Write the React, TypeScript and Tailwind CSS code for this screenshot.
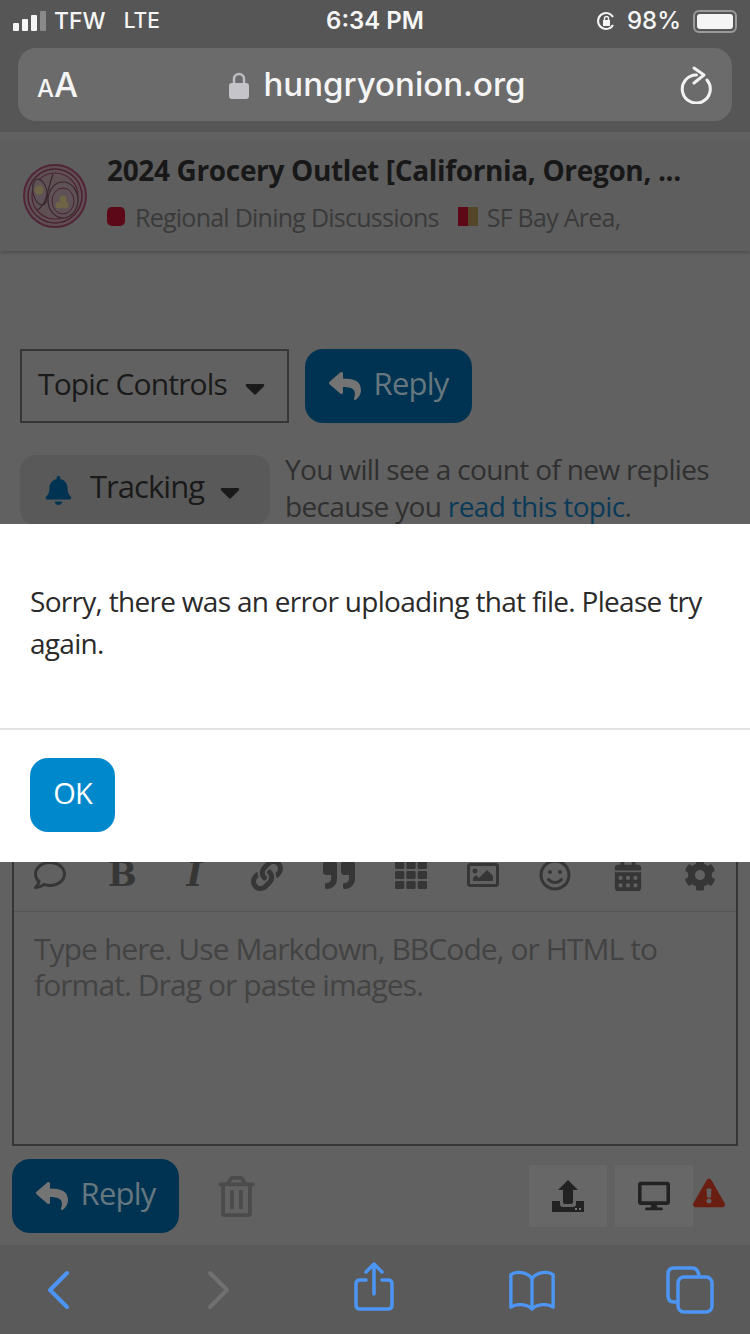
import {
  FaBell,
  FaCalendarAlt,
  FaCaretDown,
  FaCog,
  FaDesktop,
  FaExclamationTriangle,
  FaLink,
  FaQuoteRight,
  FaRegComment,
  FaRegImage,
  FaRegSmile,
  FaRegTrashAlt,
  FaReply,
  FaTh,
} from "react-icons/fa";

const font = "font-['Open_Sans','Noto_Sans',sans-serif]";

function Onion() {
  return (
    <svg width="66" height="66" viewBox="0 0 66 66" fill="none">
      <circle cx="33" cy="33" r="32" fill="#5f5054" />
      <circle cx="33" cy="33" r="31" stroke="#512639" strokeWidth="2" />
      <circle cx="33" cy="33" r="27" stroke="#4a2033" strokeWidth="1.5" />
      <circle cx="33" cy="33" r="23" stroke="#4d2437" strokeWidth="1.2" />
      <ellipse cx="41" cy="37" rx="15" ry="18" fill="#5e5256" stroke="#3a272f" strokeWidth="1.2" />
      <ellipse cx="41" cy="38" rx="11" ry="13" stroke="#4a2033" strokeWidth="1" />
      <ellipse cx="18" cy="29" rx="7" ry="13" fill="#5e5256" stroke="#3a272f" strokeWidth="1.2" transform="rotate(-12 18 29)" />
      <path d="M31 11 C25 28 25 42 15 47" stroke="#3a272f" strokeWidth="1.2" />
      <circle cx="17" cy="27" r="4.5" fill="#6f6546" />
      <circle cx="37" cy="42" r="3.5" fill="#6f6546" />
      <circle cx="41" cy="36" r="3.5" fill="#6f6546" />
      <circle cx="43" cy="42" r="3.5" fill="#6f6546" />
    </svg>
  );
}

function Reload() {
  return (
    <svg width="32" height="38" viewBox="0 0 32 38" fill="none" stroke="#f2f2f2" strokeWidth="3" strokeLinecap="round" strokeLinejoin="round">
      <path d="M16.5 9 A14 14 0 1 0 27 14" />
      <path d="M14 2 L24 9 L14 17" />
    </svg>
  );
}

function UploadIcon() {
  return (
    <svg width="32" height="32" viewBox="0 0 32 32" fill="#222">
      <path d="M16 0 L26 10 H21 V22 Q21 24 19 24 H13 Q11 24 11 22 V10 H6 Z" />
      <path d="M0 21 H8 V24 Q8 27 11 27 H21 Q24 27 24 24 V21 H32 V32 H0 Z" />
      <rect x="23" y="28" width="2" height="2" fill="#777" />
      <rect x="27" y="28" width="2" height="2" fill="#777" />
    </svg>
  );
}

function SafariBar() {
  return (
    <div className="flex h-[89px] items-center justify-between bg-[#5a5a5a] pl-[34px] pr-[36px] [&>div]:flex [&>div]:w-[48px] [&>div]:justify-center">
      <div>
        <svg width="24" height="40" viewBox="0 0 24 40" fill="none" stroke="#4c95f5" strokeWidth="4" strokeLinecap="round" strokeLinejoin="round">
          <path d="M21 3 L4 20 L21 37" />
        </svg>
      </div>
      <div>
        <svg width="24" height="40" viewBox="0 0 24 40" fill="none" stroke="#707070" strokeWidth="4" strokeLinecap="round" strokeLinejoin="round" className="ml-[5px]">
          <path d="M3 3 L20 20 L3 37" />
        </svg>
      </div>
      <div>
        <svg width="40" height="50" viewBox="0 0 40 50" fill="none" stroke="#4c95f5" strokeWidth="3.5" strokeLinecap="round" strokeLinejoin="round" className="-mt-[5px]">
          <path d="M12 18 H6 Q2 18 2 22 V43 Q2 47 6 47 H34 Q38 47 38 43 V22 Q38 18 34 18 H28" />
          <path d="M20 32 V3 M12 10 L20 2 L28 10" />
        </svg>
      </div>
      <div>
        <svg width="50" height="42" viewBox="0 0 50 42" fill="none" stroke="#4c95f5" strokeWidth="3.5" strokeLinecap="round" strokeLinejoin="round">
          <path d="M25 9 C20 2 8 1 3 5 V39 C8 35 20 35 25 41 C30 35 42 35 47 39 V5 C42 1 30 2 25 9 Z" />
          <path d="M25 9 V40" />
        </svg>
      </div>
      <div>
        <svg width="48" height="48" viewBox="0 0 48 48" fill="none" stroke="#4c95f5" strokeWidth="3.5" strokeLinejoin="round">
          <path d="M11 36 H8 Q2 36 2 30 V8 Q2 2 8 2 H26 Q32 2 33 10" />
          <rect x="12" y="11" width="34" height="35" rx="6" />
        </svg>
      </div>
    </div>
  );
}

function ReplyButton() {
  return (
    <div className="flex h-[74px] w-[167px] items-center justify-center rounded-[18px] bg-[#003352] text-[31px] tracking-[-0.8px] text-[#66777f]">
      <FaReply className="mr-[13px] text-[32px] text-[#747474]" />
      <span className="pb-[6px]">Reply</span>
    </div>
  );
}

export default function App() {
  return (
    <div className={`relative flex h-[1334px] w-[750px] flex-col overflow-hidden bg-[#616161] ${font}`}>
      {/* Safari chrome */}
      <div className="flex h-[132px] flex-col bg-[#565656]">
        <div className="flex h-[42px] items-center justify-between pl-[13px] pr-[13px] font-['Inter',sans-serif] text-[#f5f5f5]">
          <div className="flex w-[260px] items-center text-[23px] font-medium">
            <div className="flex items-end gap-[3px]">
              <span className="h-[8px] w-[6px] rounded-[1px] bg-[#f5f5f5]" />
              <span className="h-[12px] w-[6px] rounded-[1px] bg-[#f5f5f5]" />
              <span className="h-[16px] w-[6px] rounded-[1px] bg-[#f5f5f5]" />
              <span className="h-[20px] w-[6px] rounded-[1px] bg-[#8a8a8a]" />
            </div>
            <span className="ml-[8px]">TFW</span>
            <span className="ml-[18px] text-[21px]">LTE</span>
          </div>
          <div className="text-[24px] font-semibold">6:34 PM</div>
          <div className="flex w-[260px] items-center justify-end text-[24px] font-medium">
            <svg width="20" height="20" viewBox="0 0 20 20" fill="none" stroke="#f5f5f5" strokeWidth="2" className="-ml-[4px]">
              <path d="M17 14 A8 8 0 1 1 17 6" />
              <rect x="7" y="9" width="7" height="6" fill="#f5f5f5" stroke="none" />
              <path d="M8.5 9 V7.5 A2 2 0 0 1 12.5 7.5 V9" strokeWidth="1.4" />
            </svg>
            <span className="ml-[11px] mr-[1px]">98%</span>
            <div className="ml-[11px] flex h-[23px] w-[44px] items-center rounded-[6px] border-2 border-[#9a9a9a] p-[2px]">
              <div className="h-full w-full rounded-[3px] bg-[#f5f5f5]" />
            </div>
          </div>
        </div>
        <div className="mx-[18px] mt-[6px] flex h-[73px] items-center rounded-[18px] bg-[#6b6b6b] pl-[19px] pr-[20px] font-['Inter',sans-serif] text-[#f5f5f5]">
          <div className="flex w-[60px] items-baseline font-medium">
            <span className="text-[24px]">A</span>
            <span className="text-[34px]">A</span>
          </div>
          <div className="flex flex-1 items-center justify-center pr-[22px] text-[33px] font-medium">
            <svg width="20" height="28" viewBox="0 0 20 28" className="mr-[14px]" fill="none">
              <path d="M5 13 V8 A5 5 0 0 1 15 8 V13" stroke="#bdbdc2" strokeWidth="2.5" />
              <rect x="0" y="12" width="20" height="16" rx="3" fill="#c4c4c9" />
            </svg>
            hungryonion.org
          </div>
          <Reload />
        </div>
      </div>

      {/* Topic header */}
      <div className="mt-[9px] flex h-[110px] items-center bg-[#5e5e5e] pl-[22px] shadow-[0_2px_3px_rgba(0,0,0,0.2)]">
        <Onion />
        <div className="ml-[19px] flex flex-col pb-[7px]">
          <div className="text-[28px] leading-[36px] font-bold tracking-[-0.35px] text-[#181818]">
            2024 Grocery Outlet [California, Oregon, ...
          </div>
          <div className="mt-[12px] flex items-center text-[25px] leading-[34px] tracking-[-0.75px] text-[#3a3a3a]">
            <span className="h-[19px] w-[18px] rounded-[5px] bg-[#5c0818]" />
            <span className="ml-[10px]">Regional Dining Discussions</span>
            <span className="ml-[19px] flex h-[19px] w-[20px]">
              <span className="w-[10px] bg-[#5c0818]" />
              <span className="w-[10px] bg-[#544628]" />
            </span>
            <span className="ml-[9px]">SF Bay Area,</span>
          </div>
        </div>
      </div>

      {/* Topic controls */}
      <div className="mt-[98px] flex gap-[16px] pl-[20px]">
        <div className="flex h-[74px] w-[269px] items-center border-2 border-[#363636] pl-[16px] text-[30px] tracking-[-0.85px] text-[#1a1a1a]">
          <span className="pb-[6px]">Topic Controls</span>
          <FaCaretDown className="ml-[12px] mt-[4px] text-[32px] text-[#1a1a1a]" />
        </div>
        <ReplyButton />
      </div>

      <div className="mt-[32px] flex pl-[20px]">
        <div className="flex h-[70px] w-[250px] items-center rounded-[16px] bg-[#595959] pl-[24px] text-[31px] tracking-[-0.95px] text-[#1a1a1a]">
          <FaBell className="mr-[17px] text-[29px] text-[#003352]" />
          <span className="pb-[8px]">Tracking</span>
          <FaCaretDown className="ml-[10px] mt-[4px] text-[32px] text-[#1a1a1a]" />
        </div>
        <p className="ml-[15px] -mt-[4px] text-[28px] leading-[37px] tracking-[-0.65px] text-[#303030]">
          You will see a count of new replies
          <br />
          because you <span className="text-[#0b3a58]">read this topic</span>.
        </p>
      </div>

      {/* Composer */}
      <div className="mx-[12px] mt-[310px] flex h-[311px] flex-col border-2 border-t-0 border-[#363636]">
        <div className="grid h-[77px] grid-cols-10 items-end border-b border-[#555555] pb-[20px] text-[32px] text-[#363636] [&>*]:justify-self-center">
          <FaRegComment />
          <span className="font-['DejaVu_Serif',serif] text-[34px] leading-[34px] font-bold">B</span>
          <span className="font-['DejaVu_Serif',serif] text-[34px] leading-[34px] font-bold italic">I</span>
          <FaLink />
          <FaQuoteRight />
          <FaTh />
          <FaRegImage />
          <FaRegSmile />
          <FaCalendarAlt className="text-[30px]" />
          <FaCog />
        </div>
        <p className="px-[20px] pt-[19px] text-[30px] leading-[36px] tracking-[-0.93px] text-[#434343]">
          Type here. Use Markdown, BBCode, or HTML to format. Drag or paste images.
        </p>
      </div>

      <div className="mt-[13px] flex items-center pl-[12px] pr-[33px]">
        <ReplyButton />
        <FaRegTrashAlt className="ml-[37px] text-[41px] text-[#4b4b4b]" />
        <div className="ml-auto flex items-center gap-[8px]">
          <div className="flex h-[62px] w-[78px] items-center justify-center bg-[#676767]">
            <UploadIcon />
          </div>
          <div className="flex h-[62px] w-[78px] items-center justify-center bg-[#676767]">
            <FaDesktop className="text-[32px] text-[#222222]" />
          </div>
        </div>
        <FaExclamationTriangle className="-mr-[8px] -mt-[6px] text-[32px] text-[#6a1e12]" />
      </div>

      <div className="mt-auto">
        <SafariBar />
      </div>

      {/* Error dialog */}
      <div className="absolute inset-x-0 top-[524px] h-[338px] bg-white">
        <p className="h-[206px] border-b-2 border-[#e3e3e3] px-[30px] pt-[56px] text-[28px] leading-[42px] tracking-[-0.7px] text-[#2a2a2a]">
          Sorry, there was an error uploading that file. Please try again.
        </p>
        <div className="pl-[30px] pt-[28px]">
          <div className="flex h-[74px] w-[85px] items-center justify-center rounded-[18px] bg-[#0088cc] pb-[5px] text-[29px] tracking-[-0.8px] text-white">
            OK
          </div>
        </div>
      </div>
    </div>
  );
}
